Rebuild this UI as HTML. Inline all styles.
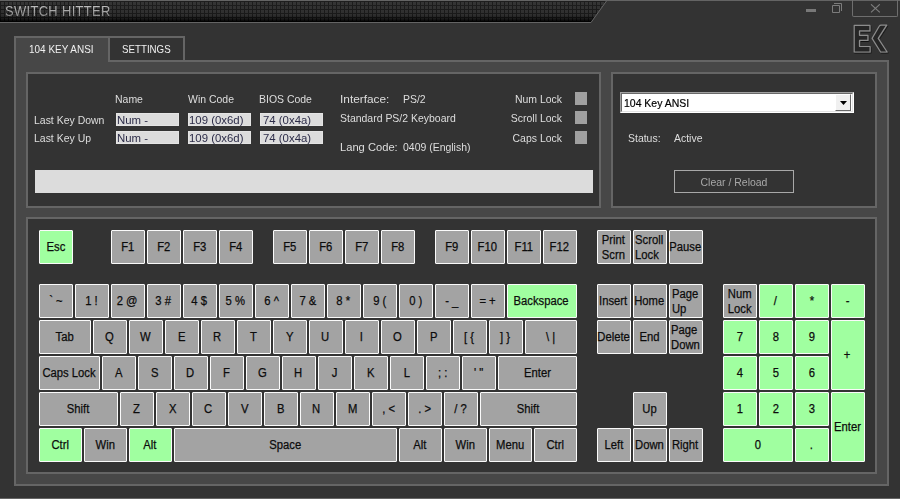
<!DOCTYPE html>
<html><head><meta charset="utf-8">
<style>
*{box-sizing:border-box;margin:0;padding:0}
html,body{width:900px;height:499px;overflow:hidden;background:#333333;font-family:"Liberation Sans",sans-serif;position:relative}
.a{position:absolute}
.bd{position:absolute;border:2px solid #656565}
.t{position:absolute;color:#dedede;font-size:11.5px;line-height:12px;white-space:pre;transform:scaleX(0.91);transform-origin:0 0}
.box{position:absolute;background:#dcdcdc;border:1px solid #e4e4e4;color:#2c2c48;font-size:11.5px;line-height:13px;white-space:pre;padding-left:0}
.box span{display:inline-block;transform:scaleX(0.99);transform-origin:0 0}
.ind{position:absolute;width:12px;height:13px;background:#a0a0a0}
.k{position:absolute;background:#a3a3a3;border:1px solid #fafafa;border-radius:1px;color:#0c0c0c;font-size:12.5px;-webkit-text-stroke:0.25px #0c0c0c;text-align:center;white-space:pre;overflow:visible;display:flex;justify-content:center;align-items:center}
.k.g{background:#a0ffa0}
.k .l{display:block;flex:none;transform:translateX(-0.5px) scaleX(0.9)}
.k .m{display:block;flex:none;line-height:15px;text-align:left;transform:translate(-0.5px,1px) scaleX(0.9)}
</style></head><body>
<!-- title bar -->
<div class="a" style="left:0;top:0;width:900px;height:1px;background:#646464"></div>
<svg class="a" style="left:0;top:0" width="620" height="24">
<defs>
<linearGradient id="tg" x1="0" y1="0" x2="0" y2="1"><stop offset="0" stop-color="#1e1e1e"/><stop offset="0.7" stop-color="#1a1a1a"/><stop offset="1" stop-color="#050505"/></linearGradient>
<linearGradient id="tg2" x1="0" y1="0" x2="0" y2="1"><stop offset="0" stop-color="#000" stop-opacity="0"/><stop offset="0.66" stop-color="#000" stop-opacity="0.05"/><stop offset="0.84" stop-color="#000" stop-opacity="0.35"/><stop offset="1" stop-color="#000" stop-opacity="0.9"/></linearGradient>
<pattern id="grid" x="1" y="2" width="4" height="4" patternUnits="userSpaceOnUse"><rect x="0" y="0" width="3" height="3" fill="#ffffff" fill-opacity="0.1"/></pattern>
</defs>
<polygon points="0,1 606,1 591,22 0,22" fill="url(#tg)"/>
<polygon points="0,1 606,1 591,22 0,22" fill="url(#grid)"/>
<polygon points="0,1 606,1 591,22 0,22" fill="url(#tg2)"/>
<polyline points="0,22.5 591,22.5 606.5,1" fill="none" stroke="#646464" stroke-width="1"/>
</svg>
<div class="t" style="left:5px;top:4px;font-size:14.5px;line-height:14px;color:#a4a4a4;background:linear-gradient(#c4c4c4 0px,#b0b0b0 5px,#8a8a8a 12px);-webkit-background-clip:text;background-clip:text;-webkit-text-fill-color:transparent;letter-spacing:0.4px;transform:scaleX(0.89);transform-origin:0 0">SWITCH HITTER</div>
<!-- window buttons -->
<div class="a" style="left:806px;top:9px;width:10px;height:3px;background:#787878"></div>
<svg class="a" style="left:830px;top:0" width="14" height="16"><path d="M2.5 5.5 H9.5 V12.5 H2.5 Z M4 3.5 H11.5 V11" fill="none" stroke="#7c7c7c" stroke-width="1"/></svg>
<div class="a" style="left:852px;top:0;width:46px;height:17px;border:1px solid #6e6e6e;border-top:none;border-radius:0 0 2px 2px"></div>
<svg class="a" style="left:870px;top:4px" width="11" height="9"><path d="M1 0.3 L9.8 8.3 M9.8 0.3 L1 8.3" stroke="#7e7e7e" stroke-width="1.1"/></svg>
<!-- logo -->
<svg class="a" style="left:850px;top:22px" width="44" height="36">
<defs><filter id="sh" x="-20%" y="-20%" width="140%" height="140%"><feDropShadow dx="0.6" dy="1" stdDeviation="0.7" flood-color="#000" flood-opacity="0.7"/></filter></defs>
<g filter="url(#sh)" stroke="#8c8c8c" stroke-width="1.2" stroke-linejoin="round" fill="#262626">
<path d="M4.2 3.3 H19.9 V8.9 H9.5 V13.3 H17.9 V18.4 H9.5 V24.5 H20.1 V30 H4.2 Z"/>
<path d="M31.2 3.1 H36.7 L28.2 16.4 L37.1 30 H30.6 L22.1 16.4 L29.2 4.2 Q29.9 3.1 31.2 3.1 Z"/>
</g>
</svg>
<!-- tabs and main panel -->
<div class="a" style="left:14px;top:60px;width:875px;height:426px;background:#474747"></div>
<div class="a" style="left:14px;top:36px;width:96px;height:26px;background:#474747"></div>
<div class="a" style="left:14px;top:36px;width:2px;height:26px;background:#656565"></div>
<div class="a" style="left:14px;top:36px;width:96px;height:2px;background:#656565"></div>
<div class="bd" style="left:108px;top:36px;width:77px;height:26px;background:#333"></div>
<div class="a" style="left:185px;top:60px;width:704px;height:2px;background:#656565"></div>
<div class="a" style="left:14px;top:60px;width:2px;height:426px;background:#656565"></div>
<div class="a" style="left:887px;top:60px;width:2px;height:426px;background:#656565"></div>
<div class="a" style="left:14px;top:484px;width:875px;height:2px;background:#656565"></div>
<div class="t" style="left:29px;top:43px;font-size:11px;color:#f0f0f0;transform:scaleX(0.905);transform-origin:0 0">104 KEY ANSI</div>
<div class="t" style="left:122px;top:43px;font-size:11px;color:#f0f0f0;transform:scaleX(0.885);transform-origin:0 0">SETTINGS</div>
<!-- info panel -->
<div class="bd" style="left:26px;top:72px;width:575px;height:136px;background:#333"></div>
<div class="t" style="left:115px;top:93px">Name</div>
<div class="t" style="left:188px;top:93px">Win Code</div>
<div class="t" style="left:259px;top:93px">BIOS Code</div>
<div class="t" style="left:34px;top:114px">Last Key Down</div>
<div class="t" style="left:34px;top:132px">Last Key Up</div>
<div class="box" style="left:116px;top:113px;width:63px;height:13px"><span>Num -</span></div>
<div class="box" style="left:188px;top:113px;width:63px;height:13px;text-indent:0px"><span>109 (0x6d)</span></div>
<div class="box" style="left:260px;top:113px;width:63px;height:13px;text-indent:1px"><span>74 (0x4a)</span></div>
<div class="box" style="left:116px;top:131px;width:63px;height:13px"><span>Num -</span></div>
<div class="box" style="left:188px;top:131px;width:63px;height:13px;text-indent:0px"><span>109 (0x6d)</span></div>
<div class="box" style="left:260px;top:131px;width:63px;height:13px;text-indent:1px"><span>74 (0x4a)</span></div>
<div class="t" style="left:340px;top:93px;transform:scaleX(1.03)">Interface:</div>
<div class="t" style="left:403px;top:93px">PS/2</div>
<div class="t" style="left:340px;top:112px">Standard PS/2 Keyboard</div>
<div class="t" style="left:340px;top:141px;transform:scaleX(0.97)">Lang Code:</div>
<div class="t" style="left:403px;top:141px">0409 (English)</div>
<div class="t" style="left:462px;top:93px;width:100px;text-align:right;transform-origin:100% 0">Num Lock</div>
<div class="t" style="left:462px;top:112px;width:100px;text-align:right;transform-origin:100% 0">Scroll Lock</div>
<div class="t" style="left:462px;top:132px;width:100px;text-align:right;transform-origin:100% 0">Caps Lock</div>
<div class="ind" style="left:575px;top:92px"></div>
<div class="ind" style="left:575px;top:111px"></div>
<div class="ind" style="left:575px;top:131px"></div>
<div class="a" style="left:35px;top:170px;width:558px;height:23px;background:#dcdcdc"></div>
<!-- right panel -->
<div class="bd" style="left:611px;top:72px;width:266px;height:136px;background:#333"></div>
<div class="a" style="left:620px;top:92px;width:234px;height:21px;background:#fff;border-style:solid;border-width:1px;border-color:#a0a0a0 #fff #fff #a0a0a0"></div>
<div class="a" style="left:621px;top:93px;width:232px;height:19px;border-style:solid;border-width:1px;border-color:#696969 #e3e3e3 #e3e3e3 #696969"></div>
<div class="t" style="left:624px;top:97px;color:#000;-webkit-text-stroke:0.2px #000">104 Key ANSI</div>
<div class="a" style="left:835px;top:94px;width:16px;height:17px;background:#f0f0f0;border-style:solid;border-width:1px;border-color:#fff #696969 #696969 #fff"></div>
<svg class="a" style="left:840px;top:101px" width="8" height="5"><path d="M0 0 H7 L3.5 4 Z" fill="#000"/></svg>
<div class="t" style="left:628px;top:132px">Status:</div>
<div class="t" style="left:674px;top:132px">Active</div>
<div class="a" style="left:674px;top:170px;width:120px;height:23px;border:1px solid #a8a8a8"></div>
<div class="t" style="left:674px;top:176px;width:120px;text-align:center;color:#a8a8a8;transform-origin:50% 0">Clear / Reload</div>
<!-- keyboard panel -->
<div class="bd" style="left:26px;top:217px;width:851px;height:257px;background:#333"></div>
<div class="k g" style="left:39px;top:230px;width:34px;height:34px;line-height:32px"><span class="l">Esc</span></div>
<div class="k" style="left:111px;top:230px;width:34px;height:34px;line-height:32px"><span class="l">F1</span></div>
<div class="k" style="left:147px;top:230px;width:34px;height:34px;line-height:32px"><span class="l">F2</span></div>
<div class="k" style="left:183px;top:230px;width:34px;height:34px;line-height:32px"><span class="l">F3</span></div>
<div class="k" style="left:219px;top:230px;width:34px;height:34px;line-height:32px"><span class="l">F4</span></div>
<div class="k" style="left:273px;top:230px;width:34px;height:34px;line-height:32px"><span class="l">F5</span></div>
<div class="k" style="left:309px;top:230px;width:34px;height:34px;line-height:32px"><span class="l">F6</span></div>
<div class="k" style="left:345px;top:230px;width:34px;height:34px;line-height:32px"><span class="l">F7</span></div>
<div class="k" style="left:381px;top:230px;width:34px;height:34px;line-height:32px"><span class="l">F8</span></div>
<div class="k" style="left:435px;top:230px;width:34px;height:34px;line-height:32px"><span class="l">F9</span></div>
<div class="k" style="left:471px;top:230px;width:34px;height:34px;line-height:32px"><span class="l">F10</span></div>
<div class="k" style="left:507px;top:230px;width:34px;height:34px;line-height:32px"><span class="l">F11</span></div>
<div class="k" style="left:543px;top:230px;width:34px;height:34px;line-height:32px"><span class="l">F12</span></div>
<div class="k" style="left:597px;top:230px;width:34px;height:34px;line-height:32px"><span class="m">Print<br>Scrn</span></div>
<div class="k" style="left:633px;top:230px;width:34px;height:34px;line-height:32px"><span class="m">Scroll<br>Lock</span></div>
<div class="k" style="left:669px;top:230px;width:34px;height:34px;line-height:32px"><span class="l">Pause</span></div>
<div class="k" style="left:39px;top:284px;width:34px;height:34px;line-height:32px"><span class="l">` ~</span></div>
<div class="k" style="left:75px;top:284px;width:34px;height:34px;line-height:32px"><span class="l">1 !</span></div>
<div class="k" style="left:111px;top:284px;width:34px;height:34px;line-height:32px"><span class="l">2 @</span></div>
<div class="k" style="left:147px;top:284px;width:34px;height:34px;line-height:32px"><span class="l">3 #</span></div>
<div class="k" style="left:183px;top:284px;width:34px;height:34px;line-height:32px"><span class="l">4 $</span></div>
<div class="k" style="left:219px;top:284px;width:34px;height:34px;line-height:32px"><span class="l">5 %</span></div>
<div class="k" style="left:255px;top:284px;width:34px;height:34px;line-height:32px"><span class="l">6 ^</span></div>
<div class="k" style="left:291px;top:284px;width:34px;height:34px;line-height:32px"><span class="l">7 &amp;</span></div>
<div class="k" style="left:327px;top:284px;width:34px;height:34px;line-height:32px"><span class="l">8 *</span></div>
<div class="k" style="left:363px;top:284px;width:34px;height:34px;line-height:32px"><span class="l">9 (</span></div>
<div class="k" style="left:399px;top:284px;width:34px;height:34px;line-height:32px"><span class="l">0 )</span></div>
<div class="k" style="left:435px;top:284px;width:34px;height:34px;line-height:32px"><span class="l">- _</span></div>
<div class="k" style="left:471px;top:284px;width:34px;height:34px;line-height:32px"><span class="l">= +</span></div>
<div class="k g" style="left:507px;top:284px;width:70px;height:34px;line-height:32px"><span class="l">Backspace</span></div>
<div class="k" style="left:597px;top:284px;width:34px;height:34px;line-height:32px"><span class="l">Insert</span></div>
<div class="k" style="left:633px;top:284px;width:34px;height:34px;line-height:32px"><span class="l">Home</span></div>
<div class="k" style="left:669px;top:284px;width:34px;height:34px;line-height:32px"><span class="m">Page<br>Up</span></div>
<div class="k" style="left:723px;top:284px;width:34px;height:34px;line-height:32px"><span class="m">Num<br>Lock</span></div>
<div class="k g" style="left:759px;top:284px;width:34px;height:34px;line-height:32px"><span class="l">/</span></div>
<div class="k g" style="left:795px;top:284px;width:34px;height:34px;line-height:32px"><span class="l">*</span></div>
<div class="k g" style="left:831px;top:284px;width:34px;height:34px;line-height:32px"><span class="l">-</span></div>
<div class="k" style="left:39px;top:320px;width:52px;height:34px;line-height:32px"><span class="l">Tab</span></div>
<div class="k" style="left:93px;top:320px;width:34px;height:34px;line-height:32px"><span class="l">Q</span></div>
<div class="k" style="left:129px;top:320px;width:34px;height:34px;line-height:32px"><span class="l">W</span></div>
<div class="k" style="left:165px;top:320px;width:34px;height:34px;line-height:32px"><span class="l">E</span></div>
<div class="k" style="left:201px;top:320px;width:34px;height:34px;line-height:32px"><span class="l">R</span></div>
<div class="k" style="left:237px;top:320px;width:34px;height:34px;line-height:32px"><span class="l">T</span></div>
<div class="k" style="left:273px;top:320px;width:34px;height:34px;line-height:32px"><span class="l">Y</span></div>
<div class="k" style="left:309px;top:320px;width:34px;height:34px;line-height:32px"><span class="l">U</span></div>
<div class="k" style="left:345px;top:320px;width:34px;height:34px;line-height:32px"><span class="l">I</span></div>
<div class="k" style="left:381px;top:320px;width:34px;height:34px;line-height:32px"><span class="l">O</span></div>
<div class="k" style="left:417px;top:320px;width:34px;height:34px;line-height:32px"><span class="l">P</span></div>
<div class="k" style="left:453px;top:320px;width:34px;height:34px;line-height:32px"><span class="l">[ {</span></div>
<div class="k" style="left:489px;top:320px;width:34px;height:34px;line-height:32px"><span class="l">] }</span></div>
<div class="k" style="left:525px;top:320px;width:52px;height:34px;line-height:32px"><span class="l">\ |</span></div>
<div class="k" style="left:597px;top:320px;width:34px;height:34px;line-height:32px"><span class="l">Delete</span></div>
<div class="k" style="left:633px;top:320px;width:34px;height:34px;line-height:32px"><span class="l">End</span></div>
<div class="k" style="left:669px;top:320px;width:34px;height:34px;line-height:32px"><span class="m">Page<br>Down</span></div>
<div class="k g" style="left:723px;top:320px;width:34px;height:34px;line-height:32px"><span class="l">7</span></div>
<div class="k g" style="left:759px;top:320px;width:34px;height:34px;line-height:32px"><span class="l">8</span></div>
<div class="k g" style="left:795px;top:320px;width:34px;height:34px;line-height:32px"><span class="l">9</span></div>
<div class="k g" style="left:831px;top:320px;width:34px;height:70px;line-height:68px"><span class="l">+</span></div>
<div class="k" style="left:39px;top:356px;width:61px;height:34px;line-height:32px"><span class="l">Caps Lock</span></div>
<div class="k" style="left:102px;top:356px;width:34px;height:34px;line-height:32px"><span class="l">A</span></div>
<div class="k" style="left:138px;top:356px;width:34px;height:34px;line-height:32px"><span class="l">S</span></div>
<div class="k" style="left:174px;top:356px;width:34px;height:34px;line-height:32px"><span class="l">D</span></div>
<div class="k" style="left:210px;top:356px;width:34px;height:34px;line-height:32px"><span class="l">F</span></div>
<div class="k" style="left:246px;top:356px;width:34px;height:34px;line-height:32px"><span class="l">G</span></div>
<div class="k" style="left:282px;top:356px;width:34px;height:34px;line-height:32px"><span class="l">H</span></div>
<div class="k" style="left:318px;top:356px;width:34px;height:34px;line-height:32px"><span class="l">J</span></div>
<div class="k" style="left:354px;top:356px;width:34px;height:34px;line-height:32px"><span class="l">K</span></div>
<div class="k" style="left:390px;top:356px;width:34px;height:34px;line-height:32px"><span class="l">L</span></div>
<div class="k" style="left:426px;top:356px;width:34px;height:34px;line-height:32px"><span class="l">; :</span></div>
<div class="k" style="left:462px;top:356px;width:34px;height:34px;line-height:32px"><span class="l">' "</span></div>
<div class="k" style="left:498px;top:356px;width:79px;height:34px;line-height:32px"><span class="l">Enter</span></div>
<div class="k g" style="left:723px;top:356px;width:34px;height:34px;line-height:32px"><span class="l">4</span></div>
<div class="k g" style="left:759px;top:356px;width:34px;height:34px;line-height:32px"><span class="l">5</span></div>
<div class="k g" style="left:795px;top:356px;width:34px;height:34px;line-height:32px"><span class="l">6</span></div>
<div class="k" style="left:39px;top:392px;width:79px;height:34px;line-height:32px"><span class="l">Shift</span></div>
<div class="k" style="left:120px;top:392px;width:34px;height:34px;line-height:32px"><span class="l">Z</span></div>
<div class="k" style="left:156px;top:392px;width:34px;height:34px;line-height:32px"><span class="l">X</span></div>
<div class="k" style="left:192px;top:392px;width:34px;height:34px;line-height:32px"><span class="l">C</span></div>
<div class="k" style="left:228px;top:392px;width:34px;height:34px;line-height:32px"><span class="l">V</span></div>
<div class="k" style="left:264px;top:392px;width:34px;height:34px;line-height:32px"><span class="l">B</span></div>
<div class="k" style="left:300px;top:392px;width:34px;height:34px;line-height:32px"><span class="l">N</span></div>
<div class="k" style="left:336px;top:392px;width:34px;height:34px;line-height:32px"><span class="l">M</span></div>
<div class="k" style="left:372px;top:392px;width:34px;height:34px;line-height:32px"><span class="l">, &lt;</span></div>
<div class="k" style="left:408px;top:392px;width:34px;height:34px;line-height:32px"><span class="l">. &gt;</span></div>
<div class="k" style="left:444px;top:392px;width:34px;height:34px;line-height:32px"><span class="l">/ ?</span></div>
<div class="k" style="left:480px;top:392px;width:97px;height:34px;line-height:32px"><span class="l">Shift</span></div>
<div class="k" style="left:633px;top:392px;width:34px;height:34px;line-height:32px"><span class="l">Up</span></div>
<div class="k g" style="left:723px;top:392px;width:34px;height:34px;line-height:32px"><span class="l">1</span></div>
<div class="k g" style="left:759px;top:392px;width:34px;height:34px;line-height:32px"><span class="l">2</span></div>
<div class="k g" style="left:795px;top:392px;width:34px;height:34px;line-height:32px"><span class="l">3</span></div>
<div class="k g" style="left:831px;top:392px;width:34px;height:70px;line-height:68px"><span class="l">Enter</span></div>
<div class="k g" style="left:39px;top:428px;width:43px;height:34px;line-height:32px"><span class="l">Ctrl</span></div>
<div class="k" style="left:84px;top:428px;width:43px;height:34px;line-height:32px"><span class="l">Win</span></div>
<div class="k g" style="left:129px;top:428px;width:43px;height:34px;line-height:32px"><span class="l">Alt</span></div>
<div class="k" style="left:174px;top:428px;width:223px;height:34px;line-height:32px"><span class="l">Space</span></div>
<div class="k" style="left:399px;top:428px;width:43px;height:34px;line-height:32px"><span class="l">Alt</span></div>
<div class="k" style="left:444px;top:428px;width:43px;height:34px;line-height:32px"><span class="l">Win</span></div>
<div class="k" style="left:489px;top:428px;width:43px;height:34px;line-height:32px"><span class="l">Menu</span></div>
<div class="k" style="left:534px;top:428px;width:43px;height:34px;line-height:32px"><span class="l">Ctrl</span></div>
<div class="k" style="left:597px;top:428px;width:34px;height:34px;line-height:32px"><span class="l">Left</span></div>
<div class="k" style="left:633px;top:428px;width:34px;height:34px;line-height:32px"><span class="l">Down</span></div>
<div class="k" style="left:669px;top:428px;width:34px;height:34px;line-height:32px"><span class="l">Right</span></div>
<div class="k g" style="left:723px;top:428px;width:70px;height:34px;line-height:32px"><span class="l">0</span></div>
<div class="k g" style="left:795px;top:428px;width:34px;height:34px;line-height:32px"><span class="l">.</span></div>
<div class="a" style="left:0;top:498px;width:900px;height:1px;background:#656565"></div>
</body></html>
